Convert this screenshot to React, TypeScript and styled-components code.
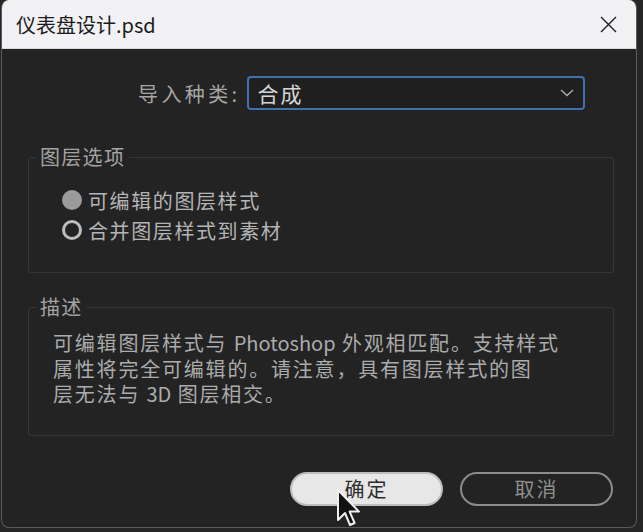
import React from "react";
import styled, { createGlobalStyle } from "styled-components";

const GlobalStyle = createGlobalStyle`
  html, body {
    margin: 0;
    padding: 0;
    background: #262626;
  }
  body {
    font-family: "Noto Sans CJK SC", "Noto Sans", sans-serif;
  }
`;

const Page = styled.div`
  width: 643px;
  height: 532px;
  padding-left: 1px;
  box-sizing: border-box;
  position: relative;
  overflow: hidden;
`;

const Window = styled.div`
  width: 636px;
  height: 528px;
  box-sizing: border-box;
  border: 1px solid #5a5a5a;
  border-top: none;
  border-radius: 8px;
  overflow: hidden;
  background: #232323;
  display: flex;
  flex-direction: column;
`;

const TitleBar = styled.div`
  height: 49px;
  flex: none;
  background: #f2f2f5;
  border-bottom: 1px solid #d8d8d8;
  box-sizing: border-box;
  display: flex;
  align-items: center;
  justify-content: space-between;
  padding: 0 19px 0 14px;
`;

const Title = styled.span`
  font-size: 20px;
  color: #1b1b1b;
`;

const CloseButton = styled.span`
  display: flex;
  width: 17px;
  height: 17px;
`;

const Body = styled.div`
  flex: 1;
  display: flex;
  flex-direction: column;
  padding: 27px 24px 0 26px;
`;

const ImportRow = styled.div`
  display: flex;
  align-items: center;
  padding-left: 110px;
  gap: 6px;
`;

const Label = styled.span`
  font-size: 20px;
  color: #a6a6a6;
  letter-spacing: 3.4px;
`;

const Select = styled.div`
  width: 338px;
  height: 34px;
  box-sizing: border-box;
  border: 2px solid #3f70b4;
  border-radius: 4px;
  background: #1f1f1f;
  display: flex;
  align-items: center;
  justify-content: space-between;
  padding: 0 9px 0 9px;
`;

const SelectValue = styled.span`
  font-size: 21px;
  color: #d6d6d6;
  letter-spacing: 2px;
`;

const Group = styled.fieldset<{ $top: number }>`
  margin: ${(p) => p.$top}px 0 0 0;
  width: 586px;
  box-sizing: border-box;
  border: 1px solid #363636;
  border-radius: 3px;
  padding: 0;
`;

const Legend = styled.legend`
  font-size: 20px;
  line-height: 24px;
  color: #a4a4a4;
  padding: 0 4px;
  margin-left: 7px;
  letter-spacing: 1.3px;
`;

const GroupContent = styled.div<{ $padTop: number; $padBottom: number; $padLeft: number }>`
  padding: ${(p) => p.$padTop}px 0 ${(p) => p.$padBottom}px ${(p) => p.$padLeft}px;
`;

const RadioRow = styled.div`
  display: flex;
  align-items: center;
  height: 30px;
  gap: 6px;
`;

const RadioDot = styled.span<{ $checked: boolean }>`
  width: 20px;
  height: 20px;
  box-sizing: border-box;
  border-radius: 50%;
  border: ${(p) => (p.$checked ? "none" : "3px solid #bdbdbd")};
  background: ${(p) => (p.$checked ? "#9b9b9b" : "transparent")};
  flex: none;
`;

const RadioText = styled.span`
  font-size: 20px;
  color: #b4b4b4;
  letter-spacing: 1.6px;
`;

const Description = styled.p`
  margin: 0;
  font-size: 20px;
  line-height: 25.5px;
  color: #ababab;
  letter-spacing: 1.8px;
`;

const Latin = styled.span`
  letter-spacing: 0;
`;

const ButtonRow = styled.div`
  display: flex;
  justify-content: flex-end;
  gap: 17px;
  margin-top: 36px;
  width: 585px;
`;

const Button = styled.button<{ $primary?: boolean }>`
  width: 153px;
  height: 34px;
  box-sizing: border-box;
  border-radius: 17px;
  font-family: "Noto Sans CJK SC", "Noto Sans", sans-serif;
  font-size: 20px;
  letter-spacing: 2px;
  padding: 0;
  display: flex;
  align-items: center;
  justify-content: center;
  border: 2px solid ${(p) => (p.$primary ? "#bdbdbd" : "#8c8c8c")};
  background: ${(p) => (p.$primary ? "#e7e7e7" : "transparent")};
  color: ${(p) => (p.$primary ? "#2d2d2d" : "#8e8e8e")};
`;

const Cursor = styled.svg`
  position: absolute;
  left: 336px;
  top: 488px;
  width: 26px;
  height: 40px;
`;

export default function App() {
  return (
    <>
      <GlobalStyle />
      <Page>
        <Window>
          <TitleBar>
            <Title>仪表盘设计.psd</Title>
            <CloseButton>
              <svg width="17" height="17" viewBox="0 0 17 17">
                <path d="M1 1 L16 16 M16 1 L1 16" stroke="#1e1e1e" strokeWidth="1.4" />
              </svg>
            </CloseButton>
          </TitleBar>
          <Body>
            <ImportRow>
              <Label>导入种类:</Label>
              <Select>
                <SelectValue>合成</SelectValue>
                <svg width="14" height="8" viewBox="0 0 14 8">
                  <path d="M1 1 L7 6.5 L13 1" stroke="#a8a8a8" strokeWidth="1.6" fill="none" />
                </svg>
              </Select>
            </ImportRow>
            <Group $top={35}>
              <Legend>图层选项</Legend>
              <GroupContent $padTop={16} $padBottom={27} $padLeft={33}>
                <RadioRow>
                  <RadioDot $checked />
                  <RadioText>可编辑的图层样式</RadioText>
                </RadioRow>
                <RadioRow>
                  <RadioDot $checked={false} />
                  <RadioText>合并图层样式到素材</RadioText>
                </RadioRow>
              </GroupContent>
            </Group>
            <Group $top={22}>
              <Legend>描述</Legend>
              <GroupContent $padTop={11} $padBottom={28} $padLeft={24}>
                <Description>
                  可编辑图层样式与 <Latin>Photoshop</Latin> 外观相匹配。支持样式
                  <br />
                  属性将完全可编辑的。请注意，具有图层样式的图
                  <br />
                  层无法与 <Latin>3D</Latin> 图层相交。
                </Description>
              </GroupContent>
            </Group>
            <ButtonRow>
              <Button $primary>确定</Button>
              <Button>取消</Button>
            </ButtonRow>
          </Body>
        </Window>
        <Cursor viewBox="0 0 13 20">
          <path
            d="M1 1 L1 16 L4.5 12.5 L7 18.5 L9.3 17.5 L6.8 11.8 L11.5 11.8 Z"
            fill="#111"
            stroke="#f0f0f0"
            strokeWidth="1"
            strokeLinejoin="round"
          />
        </Cursor>
      </Page>
    </>
  );
}
